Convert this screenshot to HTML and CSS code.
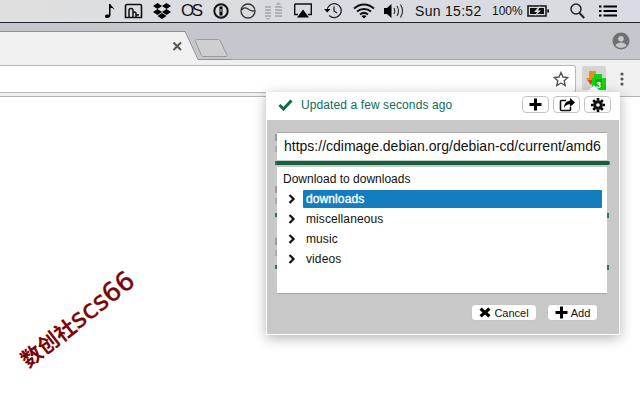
FILE: index.html
```html
<!DOCTYPE html>
<html lang="en">
<head>
<meta charset="utf-8">
<title>Download popup</title>
<link rel="stylesheet" href="styles.css">
</head>
<body>
<header class="menubar">
  <svg class="mi" width="12" height="16" viewBox="0 0 12 16"><path d="M5 1h1.500c.5 2.500 3.500 3 4 6-1-1.500-2.500-2-4-2.200V12c0 2-2 3.300-4 3-2-.4-2-2.400-.5-3.200 1-.5 2-.4 3-.1z"/></svg>
  <svg class="mi" width="19" height="16" viewBox="0 0 19 16"><path d="M3 1.500h13a1.500 1.500 0 0 1 1.500 1.500v11.500h-16V3A1.500 1.500 0 0 1 3 1.500z" fill="none" stroke="#111" stroke-width="1.600"/><path d="M5 14V7.500a2 2 0 0 1 4 0V14M9 10.500a1.500 1.500 0 0 1 3 0V14M12 12h3" fill="none" stroke="#111" stroke-width="1.500"/></svg>
  <svg class="mi" width="18" height="16" viewBox="0 0 18 16"><path d="M4.500 0 9 3 4.500 6 0 3zM13.500 0 18 3l-4.500 3L9 3zM4.500 6 9 9l-4.500 3L0 9zM13.500 6 18 9l-4.500 3L9 9zM4.500 13 9 10l4.500 3L9 16z"/></svg>
  <span class="lastfm">OS</span>
  <svg class="mi" width="16" height="16" viewBox="0 0 16 16"><circle cx="8" cy="8" r="6.700" fill="none" stroke="#111" stroke-width="2"/><path d="M6.500 3.500h3v9h-3z"/><path d="M7.500 6h1v3h-1z" fill="#d8dce2"/></svg>
  <svg class="mi" width="16" height="16" viewBox="0 0 16 16"><circle cx="8" cy="8" r="7" fill="none" stroke="#333" stroke-width="1.300"/><path d="M1.500 7c2-2.500 4.500-2.500 6.500-1s4 3 7 1.500" fill="none" stroke="#333" stroke-width="1.300"/></svg>
  <svg class="mi" width="17" height="18" viewBox="0 0 17 18"><path d="M0 4h6v2H0zM0 7h6v2H0zM0 10h6v2H0zM0 13h6v2H0zM10 4h7v2h-7zM10 7h7v2h-7zM10 10h7v2h-7zM10 13h7v2h-7zM13.500 0l3 3h-6zM3 18 0 16h6z" fill="#aeb1b6"/></svg>
  <svg class="mi" width="18" height="16" viewBox="0 0 18 16"><path d="M.7 1h16.600v10.500H14M4 11.500H.7V1" fill="none" stroke="#111" stroke-width="1.400"/><path d="M9 6.500 15 14.500H3z"/></svg>
  <svg class="mi" width="18" height="17" viewBox="0 0 18 17"><path d="M3.200 8.500a7 7 0 1 1 2 5" fill="none" stroke="#222" stroke-width="1.300"/><path d="M0 7l3.200 3.500L6.500 7z"/><path d="M10 4.500V9l3 2" fill="none" stroke="#222" stroke-width="1.300"/></svg>
  <svg class="mi" width="22" height="16" viewBox="0 0 22 16"><path d="M1 5.500c6-5.500 14-5.500 20 0M4 8.500c4-3.500 10-3.500 14 0M7 11.500c2.500-2 5.500-2 8 0" fill="none" stroke="#111" stroke-width="2"/><path d="M11 15.500 8.500 13c1.500-1 3.500-1 5 0z"/></svg>
  <svg class="mi" width="20" height="16" viewBox="0 0 20 16"><path d="M0 5h3l4.500-4v14L3 11H0z"/><path d="M10 5c1 2 1 4 0 6M13 3c1.800 3 1.800 7 0 10M16.500 1.500c2.500 4 2.500 9 0 13" fill="none" stroke="#222" stroke-width="1.100"/></svg>
  <span class="clock">Sun 15:52</span>
  <span class="percent">100%</span>
  <svg class="mi" width="22" height="12" viewBox="0 0 22 12"><path d="M1 1h18v10H1z" fill="none" stroke="#111" stroke-width="1.500"/><path d="M3 3h14v6H3z" fill="#111"/><path d="M20.300 4.500H22v3h-1.700z"/><path d="M12 1.500 7 7h3l-2 4 6-5.500h-3l2-4z" fill="#d8dce2"/></svg>
  <svg class="mi" width="15" height="16" viewBox="0 0 15 16"><circle cx="6" cy="6" r="5" fill="none" stroke="#222" stroke-width="1.500"/><path d="M9.500 10l4.700 5" stroke="#222" stroke-width="2" fill="none"/></svg>
  <svg class="mi" width="18" height="12" viewBox="0 0 18 12"><path d="M0 .5h2.500v2H0zM0 5h2.500v2H0zM0 9.500h2.500v2H0zM4.500 .5H18v2H4.500zM4.500 5H18v2H4.500zM4.500 9.500H18v2H4.500z"/></svg>
</header>

<div class="tabstrip">
  <svg class="tabshape" width="232" height="41" viewBox="0 0 232 41">
    <path d="M0 8.500h185l13 28h34" fill="none" stroke="#8f9094"/>
    <path d="M0 9h184.700L198 37.500V41H0z" fill="#f0f0f0"/>
    <path d="M173.500 19.500l7.500 7.500M181 19.500 173.500 27" stroke="#555" stroke-width="2"/>
    <path d="M197.500 16.500h21a1.500 1.500 0 0 1 1.500 1l7 14.500a1 1 0 0 1-1 1.500h-23a2 2 0 0 1-1.500-1l-6-14a1.300 1.300 0 0 1 1-2z" fill="#cfcfd1" stroke="#9a9a9e"/>
  </svg>
  <svg class="avatar" width="18" height="18" viewBox="0 0 18 18"><circle cx="9" cy="9" r="8.500" fill="#6f7074"/><circle cx="9" cy="6.800" r="2.800" fill="#c6c8cd"/><path d="M3.500 13.500c1-2.300 3.500-3 5.500-3s4.500.7 5.500 3c-1.300 1.500-3.300 2.300-5.500 2.300s-4.200-.8-5.500-2.300z" fill="#c6c8cd"/></svg>
</div>

<div class="toolbar">
  <div class="omnibox">
    <svg width="16" height="16" viewBox="0 0 16 16"><path d="M8 1.500l2 4.500 4.800.5-3.600 3.200 1 4.800L8 12l-4.200 2.500 1-4.800L1.200 6.500 6 6z" fill="none" stroke="#555" stroke-width="1.400"/></svg>
  </div>
  <div class="extbtn">
    <svg width="24" height="24" viewBox="0 0 24 24"><path d="M7 5h7v9h-2l-3 5-5-7h3z" fill="#f08a14"/><path d="M9 19l-3.500-5H11z" fill="#e2401c"/><path d="M12 8h8v4h-8z" fill="#22c822"/><path d="M10 12h14v12H10z" fill="#0fd60f"/><path d="M13 13h7v9h-7z" fill="#0fb00f"/><text x="14" y="21.500" class="badge">3</text></svg>
  </div>
  <svg class="kebab" width="4" height="14" viewBox="0 0 4 14"><circle cx="2" cy="2" r="1.600"/><circle cx="2" cy="7" r="1.600"/><circle cx="2" cy="12" r="1.600"/></svg>
</div>

<main class="page">
  <div class="watermark"><span class="wm-cjk">数创社</span><span class="wm-lat">scs66</span></div>
</main>

<span class="caret"></span>
<section class="popup">
  <div class="pophead">
    <svg class="check" width="15" height="12" viewBox="0 0 15 12"><path d="M1.500 6l4 4 8-8.500" fill="none" stroke="#0e6b45" stroke-width="3"/></svg>
    <span class="status">Updated a few seconds ago</span>
    <div class="headbtns">
      <button class="btn icon"><svg width="13" height="13" viewBox="0 0 13 13"><path d="M5 .5h3V5h4.500v3H8v4.500H5V8H.5V5H5z"/></svg></button>
      <button class="btn icon"><svg width="16" height="14" viewBox="0 0 16 14"><path d="M7 2.500H2.500a1 1 0 0 0-1 1v8a1 1 0 0 0 1 1h8a1 1 0 0 0 1-1V9" fill="none" stroke="#111" stroke-width="1.600"/><path d="M11 0l5 4.500L11 9V6.300C8 6.300 6.300 7.500 5 10c0-4 2-7 6-7.200z"/></svg></button>
      <button class="btn icon"><svg width="14" height="14" viewBox="0 0 14 14"><path d="M7 3.700a3.300 3.300 0 1 0 0 6.600 3.300 3.300 0 0 0 0-6.600z" fill="none" stroke="#111" stroke-width="3"/><path d="M5.700 0h2.600v2.500H5.700zM5.700 11.500h2.600V14H5.700zM0 5.700h2.500v2.600H0zM11.500 5.700H14v2.600h-2.500zM1.300 3.100 3.100 1.300l1.800 1.800-1.800 1.800zM9.100 10.900l1.800-1.800 1.800 1.800-1.800 1.800zM1.300 10.900l1.800-1.800 1.800 1.800-1.800 1.800zM9.100 3.100l1.800-1.800 1.800 1.800-1.800 1.800z"/></svg></button>
    </div>
  </div>
  <div class="popbody">
    <div class="urlfield"><span class="urltext">https://cdimage.debian.org/debian-cd/current/amd64/</span></div>
    <div class="greenbar"></div>
    <div class="tree">
      <div class="treetitle">Download to downloads</div>
      <div class="row"><svg class="chev" width="8" height="10" viewBox="0 0 8 10"><path d="M1.500 1l4 4-4 4" fill="none" stroke="#111" stroke-width="2.200"/></svg><span class="name selected">downloads</span></div>
      <div class="row"><svg class="chev" width="8" height="10" viewBox="0 0 8 10"><path d="M1.500 1l4 4-4 4" fill="none" stroke="#111" stroke-width="2.200"/></svg><span class="name">miscellaneous</span></div>
      <div class="row"><svg class="chev" width="8" height="10" viewBox="0 0 8 10"><path d="M1.500 1l4 4-4 4" fill="none" stroke="#111" stroke-width="2.200"/></svg><span class="name">music</span></div>
      <div class="row"><svg class="chev" width="8" height="10" viewBox="0 0 8 10"><path d="M1.500 1l4 4-4 4" fill="none" stroke="#111" stroke-width="2.200"/></svg><span class="name">videos</span></div>
    </div>
    <div class="actions">
      <button class="btn wide cancel"><svg width="12" height="11" viewBox="0 0 12 11"><path d="M2.700.5 6 3.500 9.300.5l2.200 2.200L8.500 5.500l3 2.800-2.200 2.200L6 7.500l-3.300 3L.5 8.300l3-2.800-3-2.800z"/></svg>Cancel</button>
      <button class="btn wide add"><svg width="13" height="13" viewBox="0 0 13 13"><path d="M5 .5h3V5h4.500v3H8v4.500H5V8H.5V5H5z"/></svg>Add</button>
    </div>
  </div>
</section>
</body>
</html>
```
FILE: styles.css
```css
* { box-sizing: border-box; }
html, body { margin: 0; height: 100%; }
body {
  width: 640px;
  height: 400px;
  overflow: hidden;
  display: flex;
  flex-direction: column;
  font-family: "Liberation Sans", Arial, sans-serif;
  background: #fff;
}
.menubar {
  height: 23px;
  flex: none;
  display: grid;
  grid-template-columns: 20px 29px 28px 32px 27px 25px 29px 30px 29px 31px 31px 77px 35px 43px 29px 18px;
  align-items: center;
  padding: 0 0 1px 104px;
  background: linear-gradient(90deg, #e0dfdf, #d8dce2 40%, #d8dce2);
  border-bottom: 1px solid #20232c;
  color: #111;
}
.mi { display: block; }
.lastfm { font-size: 17px; letter-spacing: -2.500px; line-height: 1; }
.clock { font-size: 14px; letter-spacing: .3px; }
.percent { font-size: 12px; }
.tabstrip {
  height: 36px;
  flex: none;
  display: flex;
  justify-content: space-between;
  align-items: flex-start;
  background: #c5c7cc;
  padding-right: 10px;
  z-index: 1;
}
.tabshape { display: block; flex: none; }
.avatar { margin-top: 9px; }
.toolbar {
  height: 38px;
  flex: none;
  display: flex;
  align-items: flex-start;
  padding-top: 5px;
  background: #f0f0f0;
  border-top: 1px solid #a8a9ac;
  border-bottom: 1px solid #b4b4b4;
}
.omnibox {
  width: 576px;
  height: 28px;
  display: flex;
  align-items: center;
  justify-content: flex-end;
  padding-right: 6px;
  background: #fff;
  border: 1px solid #b8b8b8;
  border-left: 0;
  border-radius: 0 3px 3px 0;
}
.extbtn {
  width: 24px;
  height: 24px;
  margin: 1px 0 0 6px;
  display: flex;
  align-items: center;
  justify-content: center;
  background: #d4d4d4;
  border-radius: 2px;
}
.badge { font: bold 9px "Liberation Sans", sans-serif; fill: #fff; }
.kebab { margin: 7px 0 0 14px; fill: #555; }
.page { flex: 1; position: relative; background: #fff; }
.watermark {
  position: absolute;
  left: 24px;
  top: 252px;
  transform: rotate(-38deg);
  transform-origin: left center;
  color: #7b0505;
  white-space: nowrap;
  line-height: 24px;
}
.wm-cjk { font: bold 21px/24px "Noto Sans CJK SC", sans-serif; }
.wm-lat { font: 26px/24px "DejaVu Sans", sans-serif; -webkit-text-stroke: .4px #7b0505; }
.caret {
  position: absolute;
  left: 587px;
  top: 85px;
  width: 14px;
  height: 7px;
  background: #fff;
  clip-path: polygon(50% 0, 100% 100%, 0 100%);
}
.popup {
  position: absolute;
  left: 266px;
  top: 92px;
  width: 354px;
  height: 243px;
  display: flex;
  flex-direction: column;
  background: #fff;
  padding: 0 1px 1px;
  box-shadow: 0 3px 12px rgba(0, 0, 0, .3);
}
.popup::before,
.popup::after {
  content: "";
  position: absolute;
  width: 2px;
}
.popup::before {
  left: 9px;
  top: 42px;
  height: 136px;
  background: repeating-linear-gradient(180deg,
    #9a9a9a 0 7px, transparent 7px 12px, #aaa 12px 18px,
    transparent 18px 27px, #2f7a5c 27px 31px, transparent 31px 52px);
}
.popup::after {
  left: 341px;
  top: 121px;
  height: 57px;
  background: repeating-linear-gradient(180deg, #2f7a5c 0 5px, transparent 5px 52px);
}
.pophead {
  height: 28px;
  flex: none;
  display: flex;
  align-items: center;
  padding: 0 8px 3px 11px;
}
.check { margin-right: 8px; }
.status { flex: 1; font-size: 12px; color: #0e6b5a; letter-spacing: .1px; }
.headbtns { display: flex; gap: 4px; }
.btn {
  display: flex;
  align-items: center;
  justify-content: center;
  padding: 0;
  background: #fff;
  border: 1px solid #c4c4c4;
  border-radius: 4px;
  font: 11px "Liberation Sans", sans-serif;
  color: #111;
}
.icon { width: 27px; height: 17px; }
.popbody {
  flex: 1;
  display: flex;
  flex-direction: column;
  background: #c8c8c8;
  padding: 12px 12px 12px 10px;
}
.urlfield {
  height: 28px;
  flex: none;
  padding: 0 6px 0 7px;
  line-height: 26px;
  font-size: 14px;
  background: #fff;
  color: #111;
  border-top: 1px solid #aaa;
}
.urltext { display: block; overflow: hidden; white-space: nowrap; }
.greenbar {
  height: 4px;
  flex: none;
  margin: 1px -3px 2px -2px;
  background: #14603f;
  border-radius: 2px;
}
.tree {
  height: 127px;
  flex: none;
  padding: 5px 5px 0 6px;
  background: #fff;
  border-bottom: 1px solid #a8a8a8;
  font-size: 12px;
  color: #111;
}
.treetitle { height: 17px; line-height: 14px; }
.row { height: 20px; display: flex; align-items: center; }
.chev { margin-left: 5px; margin-right: 7px; flex: none; }
.name { flex: 1; height: 18px; line-height: 18px; padding-left: 3px; letter-spacing: .1px; }
.selected { background: #147dbe; color: #fff; -webkit-text-stroke: .35px #fff; border-radius: 1px; }
.actions {
  display: flex;
  justify-content: flex-end;
  gap: 10px;
  padding: 10px 9px 0 0;
}
.wide { height: 17px; gap: 3px; }
.cancel { width: 66px; }
.add { width: 51px; }
```
